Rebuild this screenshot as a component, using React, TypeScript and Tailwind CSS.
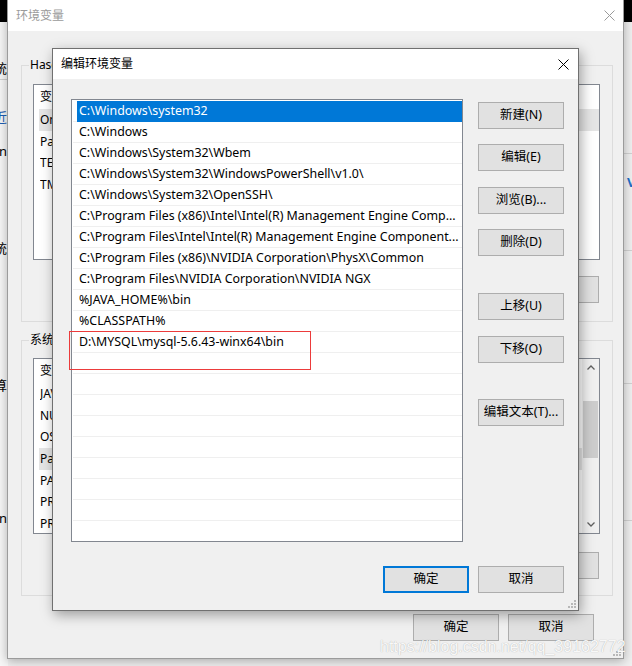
import React from "react";

function XIcon({ color }: { color: string }) {
  return (
    <svg width="11" height="11" viewBox="0 0 11 11" className="block">
      <path d="M0.5 0.5 L10.5 10.5 M10.5 0.5 L0.5 10.5" stroke={color} strokeWidth="1" fill="none" />
    </svg>
  );
}

function Grip() {
  return (
    <svg width="8" height="8" viewBox="0 0 8 8" className="block">
      <rect x="6" y="0" width="2" height="2" fill="#b8b8b8" />
      <rect x="3" y="3" width="2" height="2" fill="#b8b8b8" />
      <rect x="6" y="3" width="2" height="2" fill="#b8b8b8" />
      <rect x="0" y="6" width="2" height="2" fill="#b8b8b8" />
      <rect x="3" y="6" width="2" height="2" fill="#b8b8b8" />
      <rect x="6" y="6" width="2" height="2" fill="#b8b8b8" />
    </svg>
  );
}

function Btn({ children, focused = false }: { children: React.ReactNode; focused?: boolean }) {
  return (
    <div
      className={
        focused
          ? "flex h-[27px] w-[86px] shrink-0 items-center justify-center border-2 border-[#0078d7] bg-[#e1e1e1] text-[12.5px] text-black"
          : "flex h-[27px] w-[86px] shrink-0 items-center justify-center border border-[#adadad] bg-[#e1e1e1] text-[12.5px] text-black"
      }
    >
      {children}
    </div>
  );
}

const paths = [
  "C:\\Windows\\system32",
  "C:\\Windows",
  "C:\\Windows\\System32\\Wbem",
  "C:\\Windows\\System32\\WindowsPowerShell\\v1.0\\",
  "C:\\Windows\\System32\\OpenSSH\\",
  "C:\\Program Files (x86)\\Intel\\Intel(R) Management Engine Comp...",
  "C:\\Program Files\\Intel\\Intel(R) Management Engine Component...",
  "C:\\Program Files (x86)\\NVIDIA Corporation\\PhysX\\Common",
  "C:\\Program Files\\NVIDIA Corporation\\NVIDIA NGX",
  "%JAVA_HOME%\\bin",
  "%CLASSPATH%",
  "D:\\MYSQL\\mysql-5.6.43-winx64\\bin",
];

const rows = Array.from({ length: 21 }, (_, i) => paths[i] ?? "");

const userVars = [
  ["OneDrive", "C:\\Users\\Haseo\\OneDrive"],
  ["Path", "C:\\Users\\Haseo\\AppData\\Local\\Microsoft\\WindowsApps;"],
  ["TEMP", "C:\\Users\\Haseo\\AppData\\Local\\Temp"],
  ["TMP", "C:\\Users\\Haseo\\AppData\\Local\\Temp"],
];

const sysVars = [
  ["JAVA_HOME", "C:\\Program Files\\Java\\jdk1.8.0_191"],
  ["NUMBER_OF_PROCESSORS", "8"],
  ["OS", "Windows_NT"],
  ["Path", "C:\\Windows\\system32;C:\\Windows;"],
  ["PATHEXT", ".COM;.EXE;.BAT;.CMD;.VBS;.VBE;.JS"],
  ["PROCESSOR_ARCHITECTURE", "AMD64"],
  ["PROCESSOR_IDENTIFIER", "Intel64 Family 6 Model 158"],
];

function LeftBehind() {
  const items: [string, string, string][] = [
    ["系统", "top-[37px]", "text-black"],
    ["最近", "top-[86px]", "text-[#1a5fb4]"],
    ["in", "top-[120px]", "text-black"],
    ["系统", "top-[217px]", "text-black"],
    ["计算", "top-[354px]", "text-black"],
    ["in", "top-[487px]", "text-black"],
  ];
  return (
    <div className="absolute left-0 top-[22px] h-[644px] w-[8px] overflow-hidden bg-[#f7f7f7]">
      <div className="absolute left-0 top-[57px] h-px w-full bg-[#d0d0d0]" />
      {items.map(([t, top, c], i) => (
        <div key={i} className={`absolute left-0 flex w-[7px] justify-end whitespace-nowrap text-[13px] leading-[18px] ${top} ${c}`}>
          {t}
        </div>
      ))}
    </div>
  );
}

function RightBehind() {
  return (
    <div className="absolute left-[624px] top-[22px] h-[644px] w-[8px] overflow-hidden bg-[#f0f0f0]">
      <div className="absolute left-0 top-[131px] h-px w-full bg-[#d2d2d2]" />
      <div className="absolute left-0 top-[228px] h-px w-full bg-[#d2d2d2]" />
      <div className="absolute left-0 top-[361px] h-px w-full bg-[#d2d2d2]" />
      <div className="absolute left-0 top-[498px] h-px w-full bg-[#d2d2d2]" />
      <div className="absolute left-[3px] top-[152px] text-[13px] font-bold leading-[16px] text-[#1e6fc8]">V</div>
    </div>
  );
}

function BackList({ vars, highlight, scroll }: { vars: string[][]; highlight: number; scroll?: boolean }) {
  return (
    <div className="flex h-[176px] w-full border border-[#828790] bg-white">
      <div className="min-w-0 flex-1 overflow-hidden">
        <div className="flex h-[24px] items-center pl-[6px] text-black">
          <div className="w-[160px]">变量</div>
          <div>值</div>
        </div>
        {vars.map(([k, v], i) => (
          <div
            key={k + i}
            className={
              i === highlight
                ? "ml-[5px] flex h-[21.7px] items-center bg-[#e5e5e5] pl-[1px] whitespace-nowrap"
                : "ml-[5px] flex h-[21.7px] items-center pl-[1px] whitespace-nowrap"
            }
          >
            <div className="w-[160px] overflow-hidden">{k}</div>
            <div className="overflow-hidden">{v}</div>
          </div>
        ))}
      </div>
      {scroll && (
        <div className="flex w-[17px] flex-col bg-[#f0f0f0]">
          <div className="flex h-[17px] items-center justify-center">
            <svg width="8" height="5" viewBox="0 0 8 5"><path d="M0.5 4.5 L4 1 L7.5 4.5" stroke="#606060" strokeWidth="1.3" fill="none" /></svg>
          </div>
          <div className="mx-[1px] mt-[25px] h-[57px] bg-[#cdcdcd]" />
          <div className="flex-1" />
          <div className="flex h-[17px] items-center justify-center">
            <svg width="8" height="5" viewBox="0 0 8 5"><path d="M0.5 0.5 L4 4 L7.5 0.5" stroke="#606060" strokeWidth="1.3" fill="none" /></svg>
          </div>
        </div>
      )}
    </div>
  );
}

function BackWindow() {
  return (
    <div className="absolute left-[7px] top-[-1px] flex h-[660px] w-[617px] flex-col border border-[#9b9b9b] bg-[#f0f0f0] shadow-[0_2px_10px_rgba(0,0,0,0.3)]">
      <div className="flex h-[31px] shrink-0 items-center justify-between bg-white pl-[8px] pr-[8px]">
        <div className="text-[12px] text-[#9a9a9a]">环境变量</div>
        <XIcon color="#9a9a9a" />
      </div>
      <div className="flex flex-1 flex-col pl-[13px] pr-[10px] pt-[34px]">
        <div className="relative h-[257px] shrink-0 border border-[#dcdcdc] pl-[11px] pr-[12px] pt-[18px]">
          <div className="absolute left-[7px] top-[-9px] bg-[#f0f0f0] px-[1px] leading-[16px]">Haseo 的用户变量(U)</div>
          <BackList vars={userVars} highlight={0} />
          <div className="mt-[16px] flex justify-end gap-[10px] pr-[1px]">
            <Btn>新建(N)...</Btn>
            <Btn>编辑(E)...</Btn>
            <Btn>删除(D)</Btn>
          </div>
        </div>
        <div className="relative mt-[18px] h-[256px] shrink-0 border border-[#dcdcdc] pl-[11px] pr-[12px] pt-[17px]">
          <div className="absolute left-[7px] top-[-9px] bg-[#f0f0f0] px-[1px] leading-[16px]">系统变量(S)</div>
          <BackList vars={sysVars} highlight={3} scroll />
          <div className="mt-[18px] flex justify-end gap-[10px] pr-[1px]">
            <Btn>新建(W)...</Btn>
            <Btn>编辑(I)...</Btn>
            <Btn>删除(L)</Btn>
          </div>
        </div>
        <div className="mt-[18px] flex justify-end gap-[9px] pr-[19px]">
          <Btn>确定</Btn>
          <Btn>取消</Btn>
        </div>
      </div>
      <div className="absolute bottom-[2px] right-[2px]">
        <Grip />
      </div>
    </div>
  );
}

function FrontDialog() {
  return (
    <div className="absolute left-[52px] top-[48px] flex h-[563px] w-[527px] flex-col border border-[#707070] bg-[#f0f0f0] shadow-[2px_4px_12px_rgba(0,0,0,0.35)]">
      <div className="flex h-[30px] shrink-0 items-center justify-between bg-white pl-[8px] pr-[9px]">
        <div className="text-[12px] text-black">编辑环境变量</div>
        <XIcon color="#000000" />
      </div>
      <div className="flex flex-1 flex-col pl-[18px] pr-[14px] pt-[20px]">
        <div className="flex">
          <div className="h-[443px] w-[392px] shrink-0 overflow-hidden border border-[#828790] bg-white pl-[1px] pt-[2px] text-[12.4px]">
            {rows.map((t, i) => (
              <div key={i} className="h-[21px] border-b border-[#efefef]">
                {i === 0 ? (
                  <div className="ml-[4px] mt-[-1px] flex h-[21px] items-center bg-[#0078d7] pl-[2px] whitespace-nowrap text-white">
                    {t}
                  </div>
                ) : (
                  <div className="flex h-[20px] items-center overflow-hidden pl-[6px] whitespace-nowrap text-black">
                    {t}
                  </div>
                )}
              </div>
            ))}
          </div>
          <div className="ml-[15px] flex flex-col pt-[3px]">
            <Btn>新建(N)</Btn>
            <div className="mt-[15px]"><Btn>编辑(E)</Btn></div>
            <div className="mt-[16px]"><Btn>浏览(B)...</Btn></div>
            <div className="mt-[15px]"><Btn>删除(D)</Btn></div>
            <div className="mt-[37px]"><Btn>上移(U)</Btn></div>
            <div className="mt-[16px]"><Btn>下移(O)</Btn></div>
            <div className="mt-[36px]"><Btn>编辑文本(T)...</Btn></div>
          </div>
        </div>
        <div className="mt-[24px] flex justify-end gap-[9px]">
          <Btn focused>确定</Btn>
          <Btn>取消</Btn>
        </div>
      </div>
      <div className="absolute bottom-[2px] right-[2px]">
        <Grip />
      </div>
    </div>
  );
}

export default function App() {
  return (
    <div className="relative h-[666px] w-[632px] overflow-hidden bg-[#f0f0f0] font-['Noto_Sans','Noto_Sans_CJK_SC',sans-serif] text-[12px] text-black">
      <div className="absolute left-0 top-0 h-[22px] w-[8px] bg-black" />
      <div className="absolute right-0 top-0 h-[22px] w-[8px] bg-black" />
      <LeftBehind />
      <RightBehind />
      <BackWindow />
      <FrontDialog />
      <div className="absolute left-[69px] top-[331px] h-[39px] w-[242px] border border-[#ec3b3b]" />
      <div className="absolute left-[380px] top-[637px] whitespace-nowrap font-['Liberation_Sans',Arial,sans-serif] text-[16px] leading-[20px] text-[#f8f8f8] [text-shadow:0_0_1px_rgba(0,0,0,0.3)]">
        https://blog.csdn.net/qq_39162772
      </div>
    </div>
  );
}
